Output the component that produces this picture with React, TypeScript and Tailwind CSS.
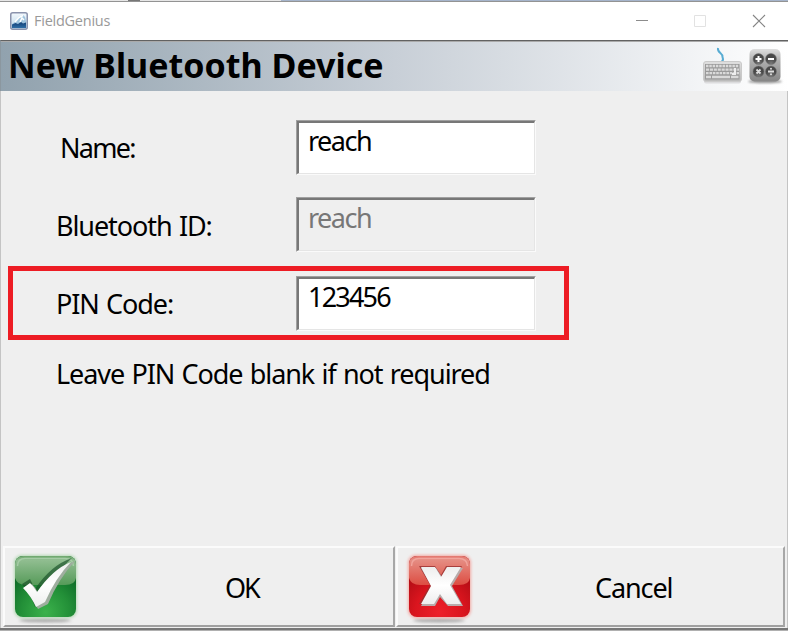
import type { ReactNode } from 'react';

function AppIcon() {
  return (
    <svg width="18" height="18" viewBox="0 0 18 18" className="shrink-0">
      <defs>
        <linearGradient id="app" x1="0" y1="0" x2="0" y2="1"><stop offset="0" stopColor="#f4f9fd" /><stop offset="1" stopColor="#b9d6ea" /></linearGradient>
        <linearGradient id="sea" x1="0" y1="0" x2="0" y2="1"><stop offset="0" stopColor="#123e75" /><stop offset="1" stopColor="#2e6da5" /></linearGradient>
      </defs>
      <rect x="0.75" y="0.75" width="16.5" height="16.5" rx="2" fill="url(#app)" stroke="#8b93ad" strokeWidth="1.5" />
      <path d="M2 12 L5 10 L9 5 L13 3 L15 5 L16 9 L16 16 L2 16Z" fill="#9fc4de" />
      <path d="M2 12.5 L5.500 11 L8 12 L11 10 L13 11.500 L16 10.500 V16 H2Z" fill="url(#sea)" />
      <path d="M5 10 L9 5.500 L13 3.500 M10 10 L12 6 L14 8" stroke="#fff" strokeWidth="1.500" fill="none" />
    </svg>
  );
}

function KeyboardIcon() {
  return (
    <svg width="42" height="38" viewBox="0 0 42 38">
      <defs><linearGradient id="kb" x1="0" y1="0" x2="0" y2="1"><stop offset="0" stopColor="#e0e0e0" /><stop offset="1" stopColor="#b9b9b9" /></linearGradient></defs>
      <rect x="3" y="32" width="37" height="4.500" rx="2" fill="#dcdcde" />
      <path d="M17 1 C16 6 22 6 21.500 10 C22 12 23 13 20.500 15" stroke="#58acd3" strokeWidth="2" fill="none" />
      <rect x="2.500" y="14.500" width="38" height="20" rx="2.500" fill="url(#kb)" stroke="#cacaca" />
      <rect x="4" y="17" width="34.500" height="15.500" fill="#9a9a9a" />
      <g stroke="#dadada" strokeWidth="2.300">
        <path d="M5 19H38" strokeDasharray="2.500 .8" />
        <path d="M5 22.600H38" strokeDasharray="3.100 .8" />
        <path d="M5 26.200H38" strokeDasharray="2.600 .8" />
        <path d="M5 30H10M11 30H29M30 30H37.500" />
      </g>
      <path d="M34 21V27H31" fill="none" stroke="#eee" strokeWidth="2" />
    </svg>
  );
}

function CalculatorIcon() {
  return (
    <svg width="38" height="38" viewBox="0 0 38 38">
      <defs>
        <linearGradient id="calc" x1="0" y1="0" x2="0" y2="1"><stop offset="0" stopColor="#dedede" /><stop offset=".35" stopColor="#b0b0b0" /><stop offset="1" stopColor="#858585" /></linearGradient>
        <radialGradient id="key" cx=".5" cy=".9"><stop offset="0" stopColor="#777" /><stop offset="1" stopColor="#484848" /></radialGradient>
        <filter id="calcShadow" x="-30%" y="-100%" width="160%" height="300%"><feGaussianBlur stdDeviation="1.2" /></filter>
      </defs>
      <ellipse cx="18" cy="34.500" rx="17" ry="1.800" fill="#999" filter="url(#calcShadow)" />
      <rect x="2.500" y="2" width="31" height="32.500" rx="5" fill="url(#calc)" />
      <g fill="url(#key)" stroke="#777" strokeWidth=".5">
        <circle cx="11.500" cy="12" r="5.500" /><circle cx="24" cy="12" r="5.500" /><circle cx="11.500" cy="24.500" r="5.500" /><circle cx="24" cy="24.500" r="5.500" />
      </g>
      <g stroke="#fff" strokeWidth="2">
        <path d="M8.500 12H14.500M11.500 9V15M21 12H27" /><path d="M9.500 22.500L13.500 26.500M13.500 22.500L9.500 26.500M21 24.500H27" stroke="#ddd" strokeWidth="1.800" />
      </g>
      <circle cx="24" cy="21.700" r="1" fill="#ddd" /><circle cx="24" cy="27.300" r="1" fill="#ddd" />
    </svg>
  );
}

function ActionIcon({ kind }: { kind: 'ok' | 'cancel' }) {
  const ok = kind === 'ok';
  return (
    <svg width="72" height="76" viewBox="0 0 72 76" className="shrink-0">
      <defs>
        <radialGradient id={kind + 'Body'} cx=".5" cy=".92" r=".8"><stop offset="0" stopColor={ok ? '#3bb24b' : '#ed202a'} /><stop offset=".5" stopColor={ok ? '#239038' : '#da151e'} /><stop offset="1" stopColor={ok ? '#086323' : '#a90b13'} /></radialGradient>
        <linearGradient id={kind + 'Shine'} x1="0" y1="0" x2="0" y2="1"><stop offset="0" stopColor={ok ? '#6da76d' : '#e3776f'} /><stop offset=".15" stopColor={ok ? '#90bd90' : '#e58c82'} /><stop offset="1" stopColor={ok ? '#569b59' : '#dd4d42'} /></linearGradient>
        <linearGradient id={kind + 'Mark'} x1="0" y1="0" x2="0" y2="1"><stop offset="0" stopColor="#eee" /><stop offset=".5" stopColor="#fff" /><stop offset="1" stopColor="#eee" /></linearGradient>
        <clipPath id={kind + 'Clip'}><rect x="6" y="7" width="61" height="61" rx="8" /></clipPath>
        <filter id={kind + 'Blur'} x="-30%" y="-100%" width="160%" height="300%"><feGaussianBlur stdDeviation="1.4" /></filter>
      </defs>
      <ellipse cx="36" cy="71.500" rx="26" ry="2" fill="#aaa" filter={ok ? 'url(#okBlur)' : 'url(#cancelBlur)'} />
      <rect x="5" y="6" width="63" height="63" rx="8" fill={ok ? '#b5d9b5' : '#f3aaa5'} filter={ok ? 'url(#okBlur)' : 'url(#cancelBlur)'} />
      <rect x="6" y="7" width="61" height="61" rx="8" fill={ok ? 'url(#okBody)' : 'url(#cancelBody)'} />
      <g clipPath={ok ? 'url(#okClip)' : 'url(#cancelClip)'}><path d="M6 7H67V29Q66 36 56 36H17Q8 36 6 29Z" fill={ok ? 'url(#okShine)' : 'url(#cancelShine)'} /></g>
      <path d="M8.500 17Q8.500 9.500 16 9.500H56Q64 9.500 64.500 17" fill="none" stroke={ok ? '#a5cca5' : '#f1a49c'} strokeWidth="1.500" />
      {ok ? (
        <>
          <path d="M14 37L22 32L27 42Q43 18 64 11Q48 25 35 56L27 60Q23 48 14 37Z" fill="#174f26" transform="translate(-1 -2)" opacity=".65" />
          <path d="M15 39L22 34Q26 38 28 43Q44 20 65 11Q49 28 38 54L28 59Q22 47 15 39Z" fill="#9fae9f" transform="translate(1 1)" />
          <path d="M14 39L21 34Q25 38 28 43Q44 20 62 13Q47 28 36 53L27 58Q22 47 14 39Z" fill="url(#okMark)" />
        </>
      ) : (
        <>
          <path d="M16 17H32L38 26L43 17H59L48 36L59 55H43L36 46L30 55H16L27 36Z" fill="#982f2f" opacity=".8" />
          <path d="M18 19H33L39 28L45 19H60L49 37L60 57H45L37 48L32 57H18L29 38Z" fill="#b8acac" />
          <path d="M18 18H32L38 28L44 18H58L47 36L58 55H44L37 45L31 55H18L28 37Z" fill="url(#cancelMark)" />
        </>
      )}
    </svg>
  );
}

function Field({ value, disabled = false, tracking = 'tracking-[-1.5px]' }: { value: string; disabled?: boolean; tracking?: string }) {
  return (
    <div className={`h-[55px] w-[240px] border-t border-l border-r border-b border-t-[#a0a0a0] border-l-[#a0a0a0] border-r-[#fafafa] border-b-[#fafafa] ${disabled ? 'text-[#777777]' : 'text-black'}`}>
      <div className={`h-full border border-t-2 border-l-2 border-t-[#777] border-l-[#777] border-r-[#e5e5e5] border-b-[#e5e5e5] pl-[9px] leading-[36px] ${tracking} ${disabled ? 'bg-[#efefef]' : 'bg-white'}`}>{value}</div>
    </div>
  );
}

function Action({ kind, children }: { kind: 'ok' | 'cancel'; children: ReactNode }) {
  return (
    <button className={`flex h-[81px] items-center border-t-2 border-r-2 border-b-2 border-l-2 border-t-[#fbfbfb] border-l-[#fbfbfb] border-r-[#a7a7a7] border-b-[#a0a0a0] bg-[#efefef] ${kind === 'ok' ? 'w-[392px] pl-[4px]' : 'w-[389px] pl-[5px]'}`}>
      <ActionIcon kind={kind} />
      <span className={kind === 'ok' ? 'ml-[144px] pt-[3px] tracking-[-2px]' : 'ml-[120px] pt-[3px] tracking-[-1.1px]'}>{children}</span>
    </button>
  );
}

export default function App() {
  return (
    <main className="flex h-[631px] w-[788px] flex-col overflow-hidden bg-[#efefef] font-['Noto_Sans',sans-serif] text-[27px] text-black">
      <div className="flex h-[2px] shrink-0 border-b border-[#939393]">
        <div className="w-[128px] bg-[#e6e6e6]" /><div className="w-[12px] bg-[#777]" /><div className="w-[141px] bg-[#e6e6e6]" /><div className="flex-1 bg-[#a5b4cb]" />
      </div>
      <header className="flex h-[38px] shrink-0 items-center bg-white pl-[10px]">
        <AppIcon />
        <span className="ml-[6px] font-['Open_Sans',sans-serif] text-[14.5px] tracking-[-0.25px] text-[#999999]">FieldGenius</span>
        <svg className="ml-auto" width="160" height="38" viewBox="0 0 160 38" fill="none">
          <path d="M8 18.500H20" stroke="#8c8c8c" /><path d="M66.500 13.500H77.500V24.500H66.500Z" stroke="#e2e2e2" /><path d="M125 13L137 25M137 13L125 25" stroke="#858585" strokeWidth="1.100" />
        </svg>
      </header>
      <div className="flex h-[51px] shrink-0 items-center border-t border-l border-t-[#626262] border-l-[#8b979f] bg-linear-to-r from-[#91a2ae] via-[#c8cfd7] to-white pl-[7px] shadow-[inset_0_1px_0_#aaa]">
        <h1 className="whitespace-nowrap pb-[2px] text-[34px] font-bold leading-[50px] tracking-[0.02px]">New Bluetooth Device</h1>
        <div className="ml-auto flex gap-[4px] pr-[3px]"><KeyboardIcon /><CalculatorIcon /></div>
      </div>
      <section className="flex h-[454px] shrink-0 flex-col border-r border-l border-[#c4c4c4] pt-[29px] tracking-[-1.08px] [word-spacing:1.4px]">
        <div className="flex h-[77px]"><label className="w-[295px] pl-[59px] leading-[55px] tracking-[-1.7px]">Name:</label><Field value="reach" /></div>
        <div className="flex h-[69px]"><label className="w-[295px] pl-[55px] leading-[57px]">Bluetooth ID:</label><Field value="reach" disabled /></div>
        <div className="ml-[7px] flex h-[74px] w-[561px] shrink-0 border-[5px] border-[#ed1c24] pt-[5px]"><label className="w-[283px] pl-[43px] leading-[55px]">PIN Code:</label><Field value="123456" tracking="tracking-[-1.8px]" /></div>
        <p className="pt-[14px] pl-[55px] leading-[40px]">Leave PIN Code blank if not required</p>
      </section>
      <footer className="flex h-[83px] shrink-0 gap-px border-r border-l border-[#c4c4c4] pl-[2px] pt-px">
        <Action kind="ok">OK</Action><Action kind="cancel">Cancel</Action>
      </footer>
      <div className="h-[3px] shrink-0 border-t-2 border-[#777] bg-[#b0b0b0]" />
    </main>
  );
}
